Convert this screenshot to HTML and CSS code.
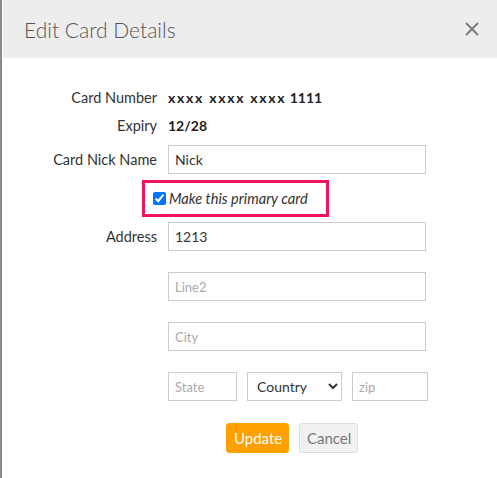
FILE: index.html
```html
<!DOCTYPE html>
<html>
<head>
<meta charset="utf-8">
<link rel="stylesheet" href="styles.css">
</head>
<body>
<div class="modal">
  <div class="modal-header">
    <h1 class="modal-title">Edit Card Details</h1>
    <svg class="close" width="14" height="14" viewBox="0 0 14 14"><path d="M1 1 L13 13 M13 1 L1 13" stroke="#777" stroke-width="1.8" fill="none"/></svg>
  </div>
  <div class="modal-body">
    <div class="row row-text">
      <span class="label">Card Number</span>
      <span class="value"><span class="mask">xxxx xxxx xxxx</span> 1111</span>
    </div>
    <div class="row row-text">
      <span class="label">Expiry</span>
      <span class="value">12/28</span>
    </div>
    <div class="row">
      <span class="label">Card Nick Name</span>
      <input class="input" type="text" value="Nick">
    </div>
    <div class="row row-check">
      <span class="label"></span>
      <label class="primary-box"><input type="checkbox" checked class="check"><span>Make this primary card</span></label>
    </div>
    <div class="row">
      <span class="label">Address</span>
      <input class="input" type="text" value="1213">
    </div>
    <div class="row row-gap">
      <span class="label"></span>
      <input class="input" type="text" placeholder="Line2">
    </div>
    <div class="row row-gap">
      <span class="label"></span>
      <input class="input" type="text" placeholder="City">
    </div>
    <div class="row row-gap">
      <span class="label"></span>
      <div class="triple">
        <input class="input state" type="text" placeholder="State">
        <select class="input country"><option>Country</option></select>
        <input class="input zip" type="text" placeholder="zip">
      </div>
    </div>
    <div class="row row-buttons">
      <span class="label"></span>
      <div class="buttons">
        <button class="btn btn-update">Update</button>
        <button class="btn btn-cancel">Cancel</button>
      </div>
    </div>
  </div>
</div>
</body>
</html>
```
FILE: styles.css
```css
html, body {
  margin: 0;
  padding: 0;
  height: 100%;
}
body {
  background: #8a8a8a;
  font-family: Lato, "Open Sans", sans-serif;
  overflow: hidden;
}
.modal {
  margin-left: 2px;
  background: #fff;
  height: 100%;
}
.modal-header {
  height: 58px;
  background: #ededed;
  margin-left: 1px;
  display: flex;
  align-items: center;
  justify-content: space-between;
  padding: 0 18px 0 21px;
}
.modal-title {
  margin: 0;
  font-size: 21px;
  font-weight: 300;
  color: #555;
  padding-top: 0;
}
.close {
  display: block;
}
.modal-body {
  padding-top: 31px;
}
.row {
  display: grid;
  grid-template-columns: 155px 258px;
  column-gap: 11px;
  align-items: center;
  margin-bottom: 10px;
}
.row-text {
  height: 18px;
}
.label {
  text-align: right;
  font-size: 14.5px;
  color: #333;
  line-height: 18px;
}
.value {
  font-size: 14px;
  font-weight: 700;
  color: #222;
  line-height: 18px;
}
.mask {
  letter-spacing: 1.7px;
}
.input {
  box-sizing: border-box;
  height: 29px;
  width: 100%;
  border: 1px solid #ccc;
  border-radius: 0;
  padding: 0 6px;
  font-family: Lato, "Open Sans", sans-serif;
  font-size: 14px;
  color: #333;
  background: #fff;
  margin: 0;
  outline: none;
}
.input::placeholder {
  color: #aaa;
  font-size: 13px;
}
.row-check {
  margin-top: -4px;
  margin-bottom: 5px;
}
.primary-box {
  box-sizing: border-box;
  margin-left: -26px;
  width: 187px;
  height: 37px;
  border: 3px solid #f0145a;
  display: flex;
  align-items: center;
  padding-left: 8px;
  font-size: 14.6px;
  font-style: italic;
  color: #333;
}
.check {
  margin: 0 3px 0 0;
  width: 13px;
  height: 13px;
}
.row-gap {
  margin-top: 21px;
}
.triple {
  display: flex;
  gap: 10px;
  width: 260px;
}
.state {
  width: 69px;
  flex: none;
}
.country {
  width: 95px;
  flex: none;
  padding-left: 5px;
  font-size: 14px;
  color: #333;
}
.zip {
  width: 76px;
  flex: none;
}
.row-buttons {
  margin-top: 22px;
}
.buttons {
  display: flex;
  gap: 10px;
  padding-left: 58px;
}
.btn {
  box-sizing: border-box;
  height: 30px;
  border-radius: 3px;
  font-family: Lato, "Open Sans", sans-serif;
  font-size: 15px;
  padding: 0 7px;
  margin: 0;
}
.btn-update {
  background: #ffa000;
  color: #fff;
  border: 1px solid #ffa000;
  width: 63px;
}
.btn-cancel {
  background: #f1f1f1;
  color: #777;
  border: 1px solid #ddd;
  width: 59px;
}
```
